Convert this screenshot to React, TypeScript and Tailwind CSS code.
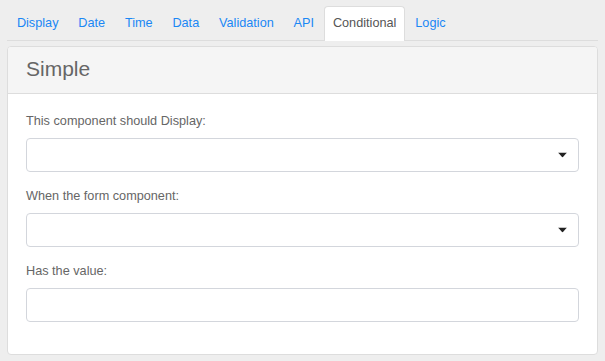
const tabs = ['Display', 'Date', 'Time', 'Data', 'Validation', 'API', 'Conditional', 'Logic'];

function Caret() {
  return (
    <svg className="absolute right-[11px] top-1/2 -translate-y-1/2" width="9" height="5" viewBox="0 0 9 5">
      <path d="M0 0h9L4.5 5z" fill="#222" />
    </svg>
  );
}

function Field({ label, select }: { label: string; select?: boolean }) {
  return (
    <div className="mb-[15px]">
      <div className="mb-[8px] text-[12.7px] leading-[18px] text-[#666]">{label}</div>
      <div className="relative h-[34px] rounded-[4px] border border-[#d3d6dc] bg-white">{select && <Caret />}</div>
    </div>
  );
}

export default function App() {
  return (
    <div
      className="h-[361px] w-full bg-[#eeeeee] px-[7px] pt-[6px]"
      style={{ fontFamily: '"Liberation Sans", Arial, sans-serif' }}
    >
      <div className="flex border-b border-[#dddddd]">
        {tabs.map((t) => (
          <div
            key={t}
            className={
              t === 'Conditional'
                ? '-mb-px rounded-t-[4px] border border-b-0 border-[#dddddd] bg-white px-[8px] pt-[7px] pb-[8px] text-[12.7px] leading-[18px] text-[#555]'
                : 'border border-transparent px-[8.9px] pt-[7px] pb-[7px] text-[12.7px] leading-[18px] text-[#1a87f5]'
            }
          >
            {t}
          </div>
        ))}
      </div>

      <div className="mt-[5px] overflow-hidden rounded-[4px] border border-[#dddddd] bg-white">
        <div className="h-[47px] border-b border-[#dddddd] bg-[#f5f5f5] pl-[18px] pt-[9px] text-[21px] leading-[26px] text-[#666]">
          Simple
        </div>
        <div className="px-[18px] pt-[18px] pb-[17px]">
          <Field label="This component should Display:" select />
          <Field label="When the form component:" select />
          <Field label="Has the value:" />
        </div>
      </div>
    </div>
  );
}
